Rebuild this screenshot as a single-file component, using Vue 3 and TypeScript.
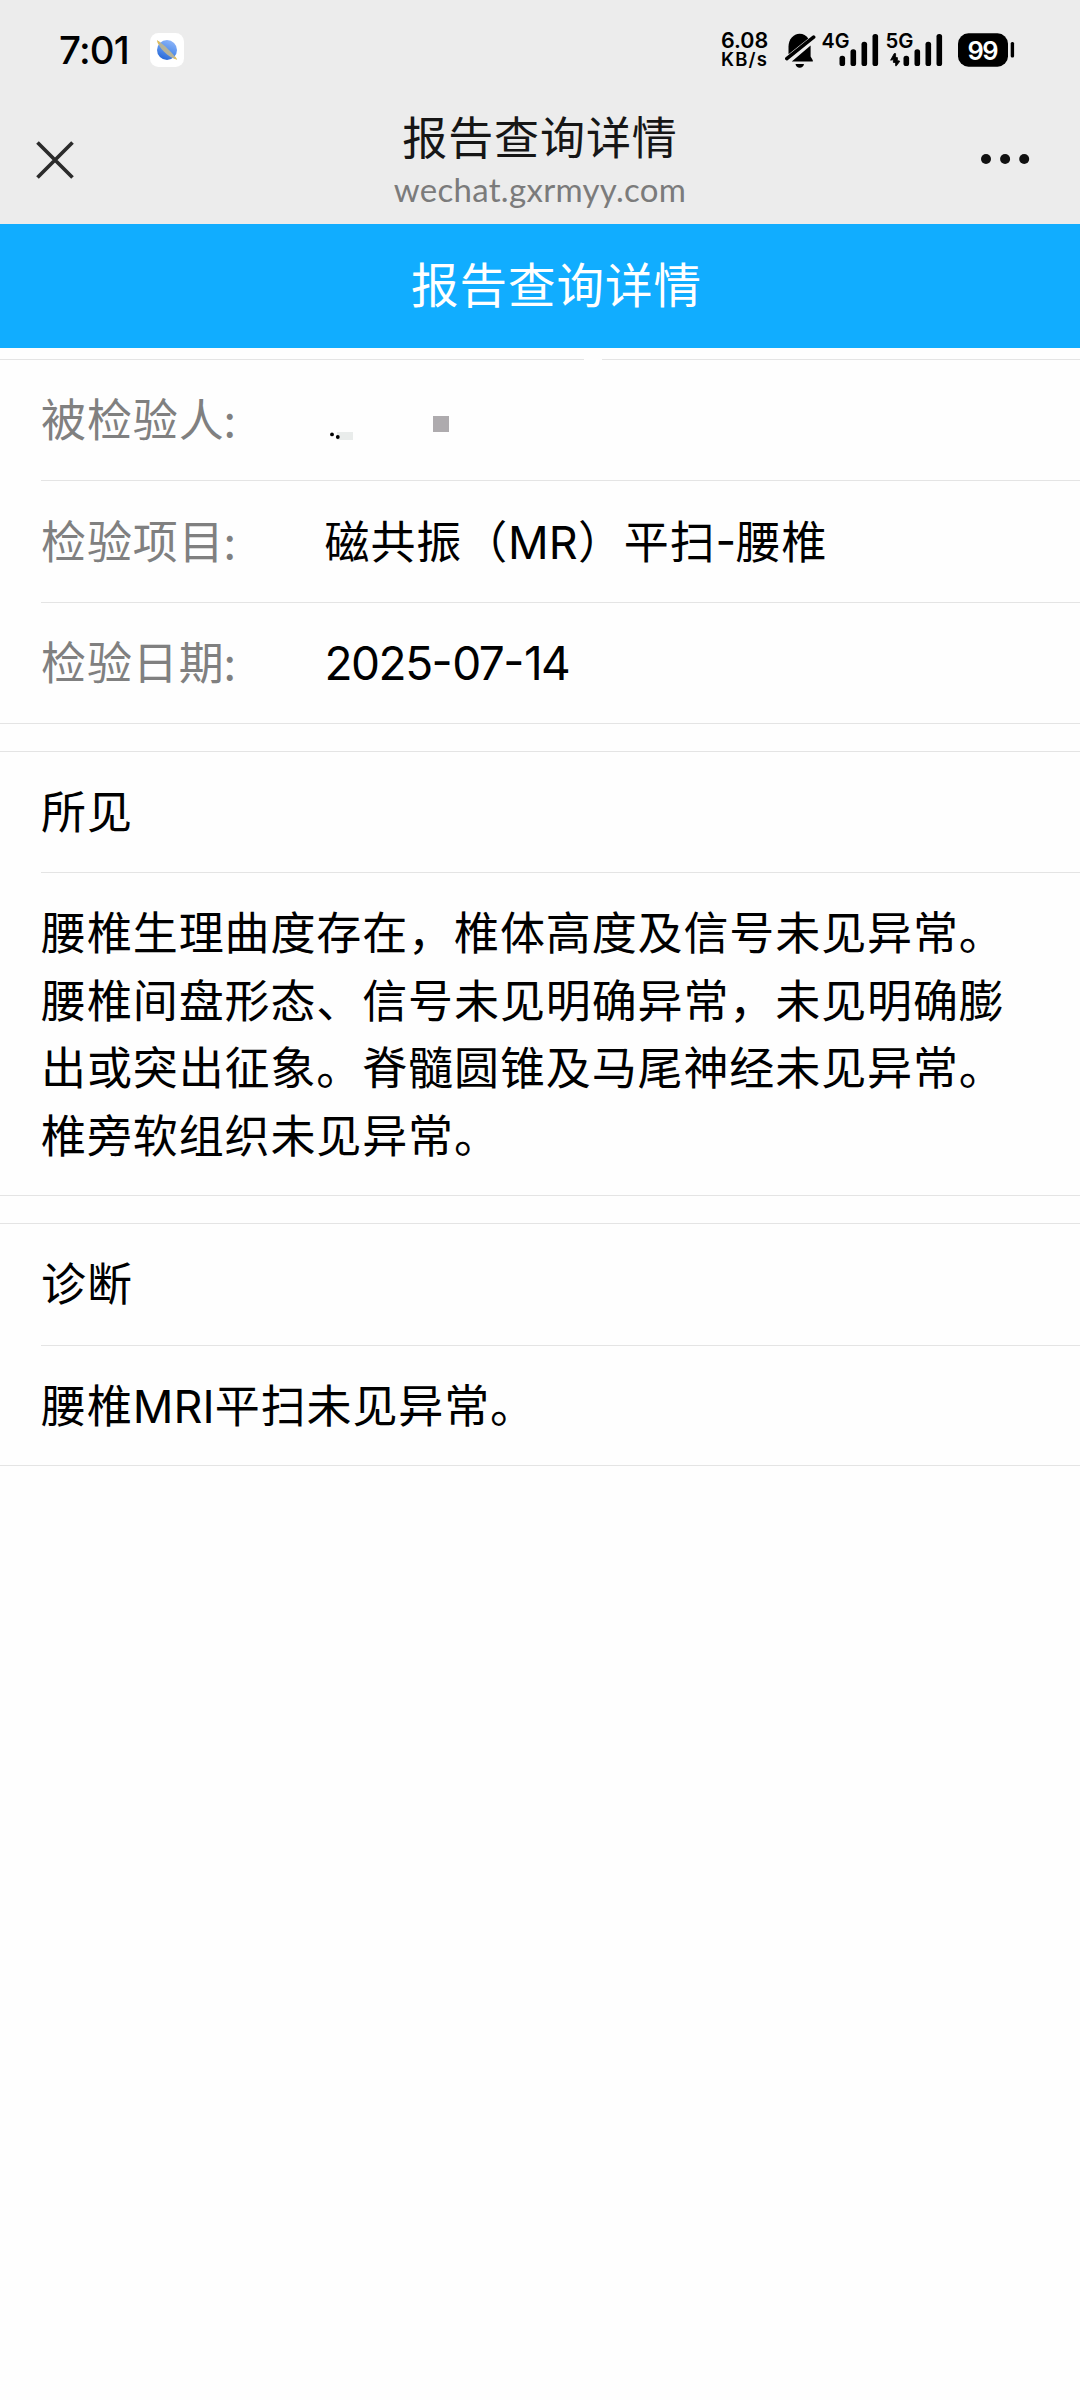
<script setup lang="ts">
interface Bar { x: number; y: number }

const bars: Bar[] = [
  { x: 0, y: 22 },
  { x: 11, y: 15.5 },
  { x: 22, y: 8 },
  { x: 33, y: 0.3 },
]

const findings =
  '腰椎生理曲度存在，椎体高度及信号未见异常。腰椎间盘形态、信号未见明确异常，未见明确膨出或突出征象。脊髓圆锥及马尾神经未见异常。椎旁软组织未见异常。'
</script>

<template>
  <div class="screen">
    <div class="status">
      <span class="clock">7:01</span>
      <svg class="app-icon" width="34" height="34" viewBox="0 0 34 34">
        <defs>
          <linearGradient id="planet" x1="0.7" y1="0" x2="0.3" y2="1">
            <stop offset="0" stop-color="#8fb6f8" />
            <stop offset="0.5" stop-color="#5a93ee" />
            <stop offset="1" stop-color="#2566d4" />
          </linearGradient>
        </defs>
        <rect width="34" height="34" rx="8.5" fill="#fff" />
        <circle cx="17" cy="17" r="10" fill="url(#planet)" />
        <path d="M7.2 7.4C8.2 14 18 24.5 27 26.4C24 21.5 13 10 7.2 7.4Z" fill="#b5b39a" />
        <path d="M7 7l3 2.4-1.8 2zM27.2 26.8l-3.4-1.2 1.5-2z" fill="#e6bf52" />
      </svg>
      <div class="speed">
        <span class="rate">6.08</span>
        <span class="unit">KB/s</span>
      </div>
      <svg class="bell" width="31" height="36" viewBox="0 0 31 36">
        <path d="M3.5 21V13.5C3.5 6.5 8.5 0.8 14.6 0.8C18.3 0.8 21.3 2.6 23.3 5.6L4.2 20.7Z" fill="#000" />
        <path d="M25.6 12.4V23.4L27.8 27.2V28.6H6.8Z" fill="#000" />
        <path d="M1.8 25.6L28.6 4.1" stroke="#000" stroke-width="3.6" stroke-linecap="round" />
        <path d="M10.5 31H19C18.5 33.5 17 34.8 14.7 34.8C12.4 34.8 11 33.5 10.5 31Z" fill="#000" />
      </svg>
      <svg class="signal" width="58" height="36" viewBox="0 0 58 36">
        <text x="-0.5" y="15.3" textLength="28" lengthAdjust="spacingAndGlyphs">4G</text>
        <rect v-for="b in bars" :key="b.x" :x="b.x + 17.5" :y="b.y + 0.7" width="5.6" :height="32.3 - b.y" rx="2.6" />
      </svg>
      <svg class="signal second" width="58" height="36" viewBox="0 0 58 36">
        <text x="-0.5" y="15.3" textLength="28" lengthAdjust="spacingAndGlyphs">5G</text>
        <path d="M4.6 27.2L8.2 20.6H9.6V29.5H7.4V26.6Z M9.6 24.6H11.4V27.4L13.8 28.2L10.4 32.8H9.6Z" stroke="#000" stroke-width="0.8" />
        <rect v-for="b in bars" :key="b.x" :x="b.x + 17.5" :y="b.y + 0.7" width="5.6" :height="32.3 - b.y" rx="2.6" />
      </svg>
      <svg class="battery" width="57" height="34" viewBox="0 0 57 34">
        <rect x="0" y="0.3" width="50" height="33.4" rx="10.5" />
        <rect x="52.7" y="9" width="3.4" height="15.4" rx="1.5" />
        <text x="24.2" y="26.6" text-anchor="middle">99</text>
      </svg>
    </div>

    <header class="nav">
      <svg class="close" width="38" height="38" viewBox="0 0 38 38">
        <path d="M1.5 1.5L36.5 36.5M36.5 1.5L1.5 36.5" stroke="#2b2b2b" stroke-width="3.7" />
      </svg>
      <div class="heading">
        <div class="title">报告查询详情</div>
        <div class="host">wechat.gxrmyy.com</div>
      </div>
      <svg class="more" width="50" height="12" viewBox="0 0 50 12">
        <circle cx="6" cy="6" r="5" />
        <circle cx="25.1" cy="6" r="5" />
        <circle cx="44.2" cy="6" r="5" />
      </svg>
    </header>

    <div class="banner">报告查询详情</div>

    <section class="group info">
      <div class="row">
        <span class="label">被检验人<span class="colon">:</span></span>
        <svg class="masked" width="125" height="30" viewBox="0 0 125 30">
          <rect x="12" y="19" width="16" height="8" fill="#e9eceb" />
          <circle cx="7" cy="21.4" r="1.9" />
          <circle cx="12.8" cy="24" r="1.9" />
          <rect x="108" y="3" width="16" height="16" fill="#aeabae" />
        </svg>
      </div>
      <div class="row">
        <span class="label">检验项目<span class="colon">:</span></span>
        <span>磁共振（<span class="latin mr">MR</span>）平扫<span class="latin dash">-</span>腰椎</span>
      </div>
      <div class="row">
        <span class="label">检验日期<span class="colon">:</span></span>
        <span class="latin date">2025<span class="hyphen">-</span>07<span class="hyphen">-</span>14</span>
      </div>
    </section>

    <section class="group findings">
      <div class="row">所见</div>
      <p class="text">{{ findings }}</p>
    </section>

    <section class="group diagnosis">
      <div class="row">诊断</div>
      <p class="text">腰椎<span class="latin mri">MRI</span>平扫未见异常。</p>
    </section>
  </div>
</template>

<style>
body {
  margin: 0;
  background: #fefefe;
}
</style>

<style scoped>
.screen {
  width: 1080px;
  height: 2400px;
  overflow: hidden;
  background: #fefefe;
  color: #000;
  font-family: "Noto Sans CJK SC", sans-serif;
  font-size: 45px;
  letter-spacing: 0.89px;
}

.status {
  display: flex;
  align-items: flex-start;
  box-sizing: border-box;
  height: 100px;
  padding: 33px 0 0 59px;
  background: #ececec;
  letter-spacing: 0;
  font-family: Inter, sans-serif;
}

.clock {
  width: 91px;
  font-size: 38.5px;
  font-weight: 500;
  line-height: 34px;
  letter-spacing: -0.8px;
  white-space: nowrap;
}

.speed {
  display: flex;
  flex-direction: column;
  width: 64px;
  margin-left: 537px;
  font-weight: 600;
  white-space: nowrap;
}

.rate {
  font-size: 21.5px;
  line-height: 15px;
}

.unit {
  margin-top: 4px;
  font-size: 18.5px;
  letter-spacing: 1.2px;
  line-height: 15px;
}

.signal {
  margin-left: 5.5px;
  overflow: visible;
}

.signal.second {
  margin-left: 6px;
}

.signal text {
  font: 600 20.5px Inter, sans-serif;
}

.battery {
  margin-left: 14.5px;
}

.battery text {
  fill: #fff;
  font: 600 25.5px Inter, sans-serif;
  letter-spacing: -1.5px;
}

.nav {
  display: flex;
  justify-content: space-between;
  align-items: flex-start;
  box-sizing: border-box;
  height: 124px;
  padding: 0 50px 0 35.5px;
  background: #ececec;
}

.close {
  margin-top: 40.5px;
}

.heading {
  display: flex;
  flex-direction: column;
  align-items: center;
  margin-left: 26.5px;
}

.title {
  color: #161616;
  line-height: 66px;
  margin-top: 3px;
}

.host {
  color: #7b7b7b;
  font-family: Lato, sans-serif;
  font-size: 33px;
  letter-spacing: 0.3px;
  line-height: 40px;
  white-space: nowrap;
}

.more {
  margin-top: 53px;
  fill: #111;
}

.banner {
  height: 124px;
  padding-left: 33px;
  background: #11adff;
  color: #fff;
  font-size: 47.5px;
  letter-spacing: 1px;
  line-height: 117px;
  text-align: center;
}

.group {
  box-sizing: border-box;
  margin-bottom: 27px;
  border-top: 1px solid #e4e4e4;
  border-bottom: 1px solid #e4e4e4;
}

.info {
  height: 365px;
  margin-top: 11px;
  border-top: 0;
  background: linear-gradient(to right, #e4e4e4 584px, transparent 584px 602px, #e4e4e4 602px) top / 100% 1px no-repeat;
  padding-top: 1px;
}

.findings {
  height: 445px;
}

.diagnosis {
  height: 243px;
}

.row {
  display: flex;
  align-items: center;
  box-sizing: border-box;
  height: 121.4px;
  margin-left: 41px;
  padding-bottom: 5px;
  border-bottom: 1px solid #e4e4e4;
  white-space: nowrap;
}

.diagnosis .row {
  height: 122px;
  padding-bottom: 7px;
}

.info .row:last-child {
  border-bottom: 0;
}

.label {
  width: 283.5px;
  color: #808080;
}

.colon {
  margin-left: -1.2px;
}

.masked {
  margin-top: 20px;
}

.text {
  margin: 0;
  padding: 24px 41px;
  line-height: 67.5px;
}

.latin {
  font-family: Inter, "Noto Sans CJK SC", sans-serif;
}

.mr,
.mri {
  letter-spacing: 0.1px;
}

.dash,
.hyphen {
  font-feature-settings: "case";
}

.dash {
  letter-spacing: -0.6px;
}

.date {
  margin-top: 5px;
  font-size: 46px;
  letter-spacing: -1.5px;
}

.hyphen {
  letter-spacing: -0.6px;
}
</style>
